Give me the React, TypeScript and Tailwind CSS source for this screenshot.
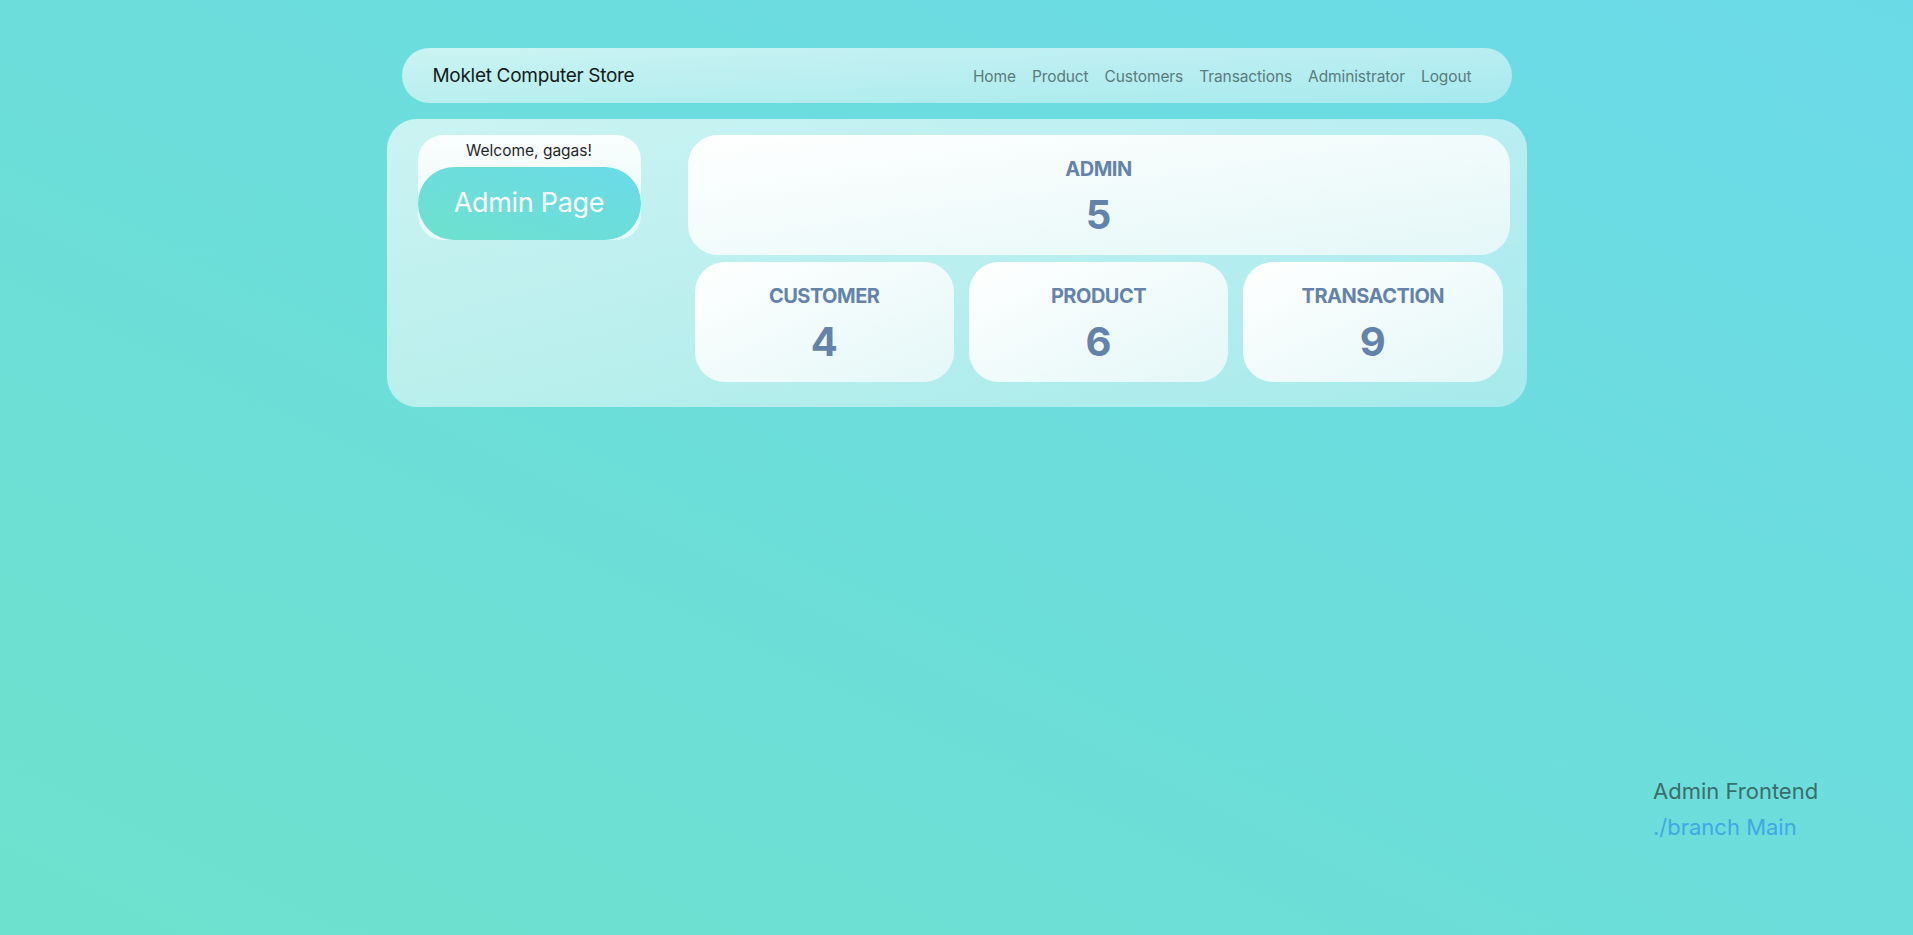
import React from 'react';

const links = ['Home', 'Product', 'Customers', 'Transactions', 'Administrator', 'Logout'];

const stats = [
  { label: 'CUSTOMER', value: 4 },
  { label: 'PRODUCT', value: 6 },
  { label: 'TRANSACTION', value: 9 },
];

function StatCard({ label, value, className = '' }: { label: string; value: number; className?: string }) {
  return (
    <div
      className={`flex h-[120px] flex-col items-center rounded-[30px] bg-gradient-to-br from-white to-[#e4f7f7] pt-[22px] text-[#6383ab] ${className}`}
    >
      <div className="text-[20px] font-bold leading-6 tracking-tight">{label}</div>
      <div className="mt-[10px] text-[40px] font-bold leading-[48px]">{value}</div>
    </div>
  );
}

export default function App() {
  return (
    <div
      className="relative min-h-screen w-full bg-gradient-to-tr from-[#6ee1cd] to-[#6bdae8]"
      style={{ fontFamily: 'Inter, "Liberation Sans", sans-serif' }}
    >
      <div className="flex flex-col items-center pt-[48px]">
        {/* navbar */}
        <nav className="flex h-[55px] w-[1110px] items-center justify-between rounded-full bg-gradient-to-br from-white/65 to-white/40 pl-[31px] pr-[32px] pt-[2px]">
          <span className="text-[19px] tracking-[-0.3px] text-[#141b1b]">Moklet Computer Store</span>
          <div className="flex">
            {links.map((l) => (
              <a key={l} className="px-2 text-[15.5px] tracking-[-0.1px] text-[#5a7b7c]">
                {l}
              </a>
            ))}
          </div>
        </nav>

        {/* main */}
        <div className="mt-[16px] flex w-[1140px] rounded-[30px] bg-gradient-to-br from-white/65 to-white/40 pb-[25px] pl-[31px] pr-[17px] pt-[16px]">
          <div className="flex w-[223px] flex-col self-start rounded-[25px] bg-gradient-to-b from-white/90 to-white/60">
            <div className="pt-1 text-center text-[15.5px] leading-6 text-[#1f2929]">Welcome, gagas!</div>
            <div className="mt-1 flex h-[73px] items-center justify-center rounded-[36px] bg-gradient-to-tr from-[#6ee1cd] to-[#6bdae8] text-[27px] tracking-[-0.3px] text-white">
              Admin Page
            </div>
          </div>

          <div className="ml-[47px] flex flex-1 flex-col">
            <StatCard label="ADMIN" value={5} />
            <div className="mt-[7px] grid grid-cols-3 gap-[15px] px-[7px]">
              {stats.map((s) => (
                <StatCard key={s.label} label={s.label} value={s.value} />
              ))}
            </div>
          </div>
        </div>
      </div>

      {/* footer note */}
      <div className="absolute left-[1653px] top-[773px] text-[22px] leading-[36px]">
        <div className="text-[#3b6d6c]">Admin Frontend</div>
        <div className="text-[#41a7e6]">./branch Main</div>
      </div>
    </div>
  );
}
